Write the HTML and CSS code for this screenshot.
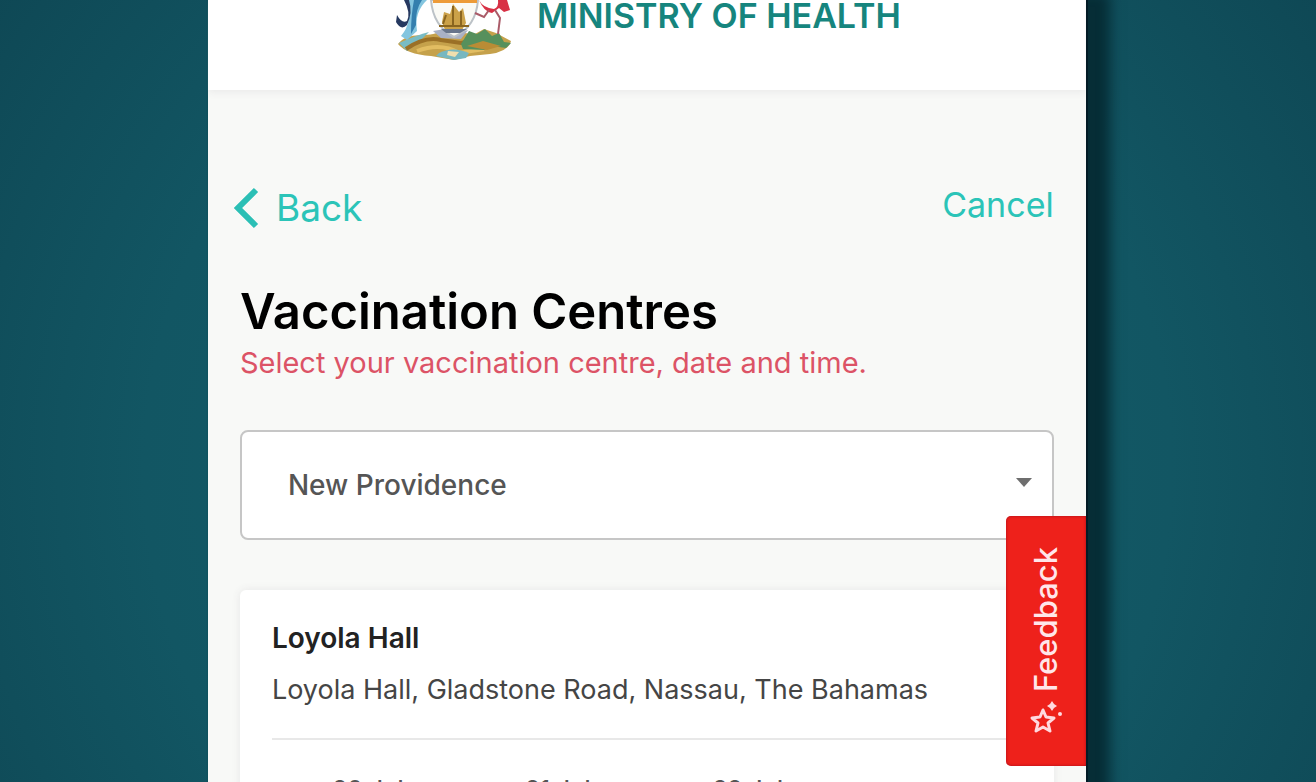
FILE: index.html
```html
<!DOCTYPE html>
<html lang="en">
  <head>
    <meta charset="UTF-8" />
    <meta name="viewport" content="width=device-width, initial-scale=1.0" />
    <title>Vaccination Centres</title>
    <link rel="stylesheet" href="styles.css">
  </head>
  <body>
    <div class="page">
      <header class="header">
        <svg class="header__crest" viewBox="0 0 120 62" aria-hidden="true">
          <path d="M5 44C16 30 35 39 48 31L82 34L91 29L103 33L118 41Q116 51 97 54L77 56L61 60L38 56Q13 54 5 44Z" fill="#c5a14b" />
          <path d="M6 43Q24 35 36 32L26 42L14 51Z" fill="#79bcc4" />
          <path d="M13 49Q32 36 48 40L68 43L90 38L110 45" fill="none" stroke="#9b7026" stroke-width="4" />
          <path d="M24 51Q48 42 66 53L91 49" fill="none" stroke="#e2bd62" stroke-width="4" />
          <path d="M68 44L76 31L84 34L92 29L99 36L106 33L111 42L118 43L113 48L99 46L91 50L70 49Z" fill="#56905c" />
          <path d="M74 46L90 41L108 46L94 50Z" fill="#b98c35" />
          <path d="M40 31L52 29L67 32L75 30L68 39L48 38Z" fill="#a9b1c5" />
          <path d="M38 0H85Q83 27 61 37Q40 26 38 0Z" fill="#fafaf5" stroke="#bcc2c7" stroke-width="2" />
          <path d="M40 0H84V3H40Z" fill="#ed9b38" />
          <path d="M49 22L51 12L57 14L60 4L66 12L70 8L73 23L69 30H52Z" fill="#cba148" />
          <path d="M60 6V27M68 11V26M53 15L50 24M46 26H76" fill="none" stroke="#8a651f" stroke-width="2" />
          <path d="M48 29H74L67 33H53Z" fill="#68758b" />
          <path d="M15 0H34Q21 12 24 31L14 40L8 36Q20 22 15 0Z" fill="#83c5df" />
          <path d="M16 0Q20 13 14 25Q8 31 3 22L4 15Q9 24 14 21Q18 13 11 0Z" fill="#263960" />
          <path d="M29 0Q22 10 23 25L18 34Q18 15 21 0Z" fill="#347fae" />
          <path d="M86 0Q90 8 101 9Q106 7 105 0L114 0L117 10L111 12L106 8L99 13Q91 12 86 0Z" fill="#d83045" />
          <path d="M102 10L107 18L105 34M96 10L91 17L82 13" fill="none" stroke="#aa5b68" stroke-width="2" />
          <path d="M46 53Q60 46 76 53L73 58L61 60L43 56Z" fill="#77b7c0" />
          <path d="M55 51L66 52L62 57L54 55Z" fill="#f1dfae" />
        </svg>
        <div class="header__title">MINISTRY OF HEALTH</div>
      </header>
      <main class="content">
        <nav class="nav">
          <a class="nav__back" href="#">
            <svg class="nav__arrow" viewBox="0 0 26 42" aria-hidden="true">
              <path d="M22 3L4 21L22 39" />
            </svg>
            Back
          </a>
          <a class="nav__cancel" href="#">Cancel</a>
        </nav>
        <h1 class="title">Vaccination Centres</h1>
        <p class="subtitle">Select your vaccination centre, date and time.</p>
        <div class="island">
          <select class="island__select" aria-label="Island">
            <option>New Providence</option>
          </select>
          <svg class="island__caret" viewBox="0 0 16 9" aria-hidden="true">
            <path d="M0 0H16L8 9Z" />
          </svg>
        </div>
        <section class="card">
          <h2 class="card__name">Loyola Hall</h2>
          <p class="card__address">Loyola Hall, Gladstone Road, Nassau, The Bahamas</p>
          <div class="dates">
            <button class="dates__item" type="button">20 July</button>
            <button class="dates__item" type="button">21 July</button>
            <button class="dates__item" type="button">22 July</button>
          </div>
        </section>
      </main>
      <button class="feedback" type="button">
        <svg class="feedback__icon" viewBox="0 0 34 34" aria-hidden="true">
          <path class="feedback__star" d="M14 9L17 16L25 17L19 22L21 30L14 26L7 30L9 22L3 17L11 16Z" />
          <path class="feedback__spark" d="M23 0L25 3L28 5L25 7L23 10L21 7L18 5L21 3Z" />
          <circle class="feedback__spark" cx="31" cy="13" r="2" />
        </svg>
        <span class="feedback__text">Feedback</span>
      </button>
    </div>
  </body>
</html>
```

FILE: styles.css
```css
* {
  box-sizing: border-box;
  margin: 0;
  padding: 0;
}

body {
  height: 100vh;
  overflow: hidden;
  font-family: Inter, "Open Sans", sans-serif;
  background: radial-gradient(ellipse 65% 110% at 50% 60%, #13606c 0%, #125663 60%, #0e4653 100%);
}

a {
  text-decoration: none;
}

.page {
  position: relative;
  width: 66.7%;
  min-height: 100vh;
  margin-left: 15.8%;
  background-color: #f8f9f7;
  box-shadow: 2px 0 0 #031b25, 16px 0 12px 8px #062d36;
  clip-path: inset(0 -60px 0 -1px);
}

.header {
  display: flex;
  justify-content: center;
  gap: 24px;
  height: 90px;
  background-color: #fff;
  box-shadow: 0 2px 8px #e9e9e9;
  clip-path: inset(0 0 -12px 0);
}

.header__crest {
  width: 120px;
  height: 62px;
}

.header__title {
  color: #16857e;
  font-size: 34px;
  font-weight: 600;
  line-height: 32px;
}

.content {
  padding: 94px 32px 0;
}

.nav {
  display: flex;
  justify-content: space-between;
  height: 48px;
}

.nav__back,
.nav__cancel {
  color: #2bc4b8;
  font-size: 34px;
  line-height: 42px;
}

.nav__back {
  display: flex;
  align-items: center;
  gap: 16px;
  margin-left: -6px;
  font-size: 37px;
}

.nav__arrow {
  width: 26px;
  height: 42px;
  fill: none;
  stroke: #2bbfb5;
  stroke-width: 6px;
}

.title {
  margin-top: 50px;
  color: #000;
  font-size: 49px;
  font-weight: 600;
  line-height: 60px;
}

.subtitle {
  color: #dc5366;
  font-size: 29px;
  line-height: 42px;
}

.island {
  position: relative;
  margin-top: 46px;
}

.island__select {
  display: block;
  width: 100%;
  height: 110px;
  padding: 0 46px;
  color: #555;
  font: 500 28px Inter, "Open Sans", sans-serif;
  background-color: #fff;
  border: 2px solid #c6c6c6;
  border-radius: 8px;
  appearance: none;
}

.island__caret {
  position: absolute;
  top: 48px;
  right: 22px;
  width: 16px;
  height: 9px;
  fill: #6e6e6e;
}

.card {
  margin-top: 50px;
  padding: 28px 32px;
  background-color: #fff;
  border-radius: 6px;
  box-shadow: 0 0 8px #e6e6e6;
}

.card__name {
  color: #222;
  font-size: 28px;
  font-weight: 600;
  line-height: 40px;
}

.card__address {
  margin-top: 12px;
  padding-bottom: 28px;
  color: #454545;
  font-size: 27px;
  line-height: 40px;
  border-bottom: 2px solid #e8e8e8;
}

.dates {
  display: flex;
  padding: 34px 0 0 8px;
}

.dates__item {
  width: 190px;
  color: #555;
  font: 500 24px Inter, "Open Sans", sans-serif;
  line-height: 32px;
  background: none;
  border: none;
}

/* Side tab, sits over the content */
.feedback {
  position: absolute;
  top: 516px;
  right: 0;
  display: flex;
  flex-direction: column-reverse;
  align-items: center;
  justify-content: center;
  gap: 8px;
  width: 80px;
  height: 250px;
  color: #ffe6ea;
  font: 500 31px Inter, "Open Sans", sans-serif;
  background-color: #ee211b;
  border: none;
  border-radius: 5px 0 0 5px;
  box-shadow: inset 0 0 3px #a60c1c;
}

.feedback__text {
  writing-mode: vertical-rl;
  transform: rotate(180deg);
}

.feedback__icon {
  width: 34px;
  height: 34px;
}

.feedback__star {
  fill: none;
  stroke: #ffd9df;
  stroke-width: 3px;
  stroke-linejoin: round;
}

.feedback__spark {
  fill: #ffd9df;
}
```
